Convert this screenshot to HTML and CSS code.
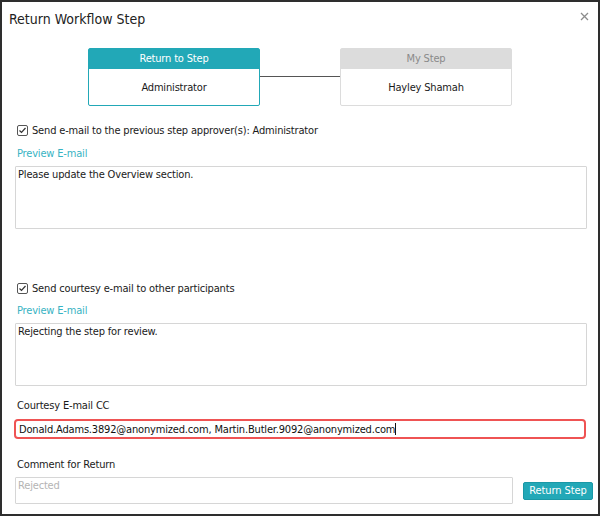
FILE: index.html
```html
<!DOCTYPE html>
<html>
<head>
    <title>Return Workflow Step</title>
    <link rel="stylesheet" href="styles.css">
</head>
<body>

<div class="dialog">
    <div class="dialog-head">
        <h1>Return Workflow Step</h1>
        <span class="close">
            <svg width="9" height="9" viewBox="0 0 9 9"><path d="M1 1 L8 8 M8 1 L1 8" stroke="#8c8c8c" stroke-width="1.3"/></svg>
        </span>
    </div>

    <div class="steps">
        <div class="step active">
            <div class="step-head">Return to Step</div>
            <div class="step-body">Administrator</div>
        </div>
        <div class="step-line"></div>
        <div class="step">
            <div class="step-head">My Step</div>
            <div class="step-body">Hayley Shamah</div>
        </div>
    </div>

    <div class="form">
        <label class="check first">
            <svg width="11" height="11" viewBox="0 0 11 11"><rect x="0.5" y="0.5" width="10" height="10" rx="1.5" fill="#fff" stroke="#555"/><path d="M2.5 5.5 L4.5 7.5 L8.5 3" fill="none" stroke="#333" stroke-width="1.2"/></svg>
            Send e-mail to the previous step approver(s): Administrator
        </label>
        <a class="preview first" href="#">Preview E-mail</a>
        <textarea class="message">Please update the Overview section.</textarea>

        <label class="check second">
            <svg width="11" height="11" viewBox="0 0 11 11"><rect x="0.5" y="0.5" width="10" height="10" rx="1.5" fill="#fff" stroke="#555"/><path d="M2.5 5.5 L4.5 7.5 L8.5 3" fill="none" stroke="#333" stroke-width="1.2"/></svg>
            Send courtesy e-mail to other participants
        </label>
        <a class="preview" href="#">Preview E-mail</a>
        <textarea class="message">Rejecting the step for review.</textarea>

        <div class="label cc">Courtesy E-mail CC</div>
        <div class="field error">Donald.Adams.3892@anonymized.com, Martin.Butler.9092@anonymized.com<span class="caret"></span></div>

        <div class="label comment">Comment for Return</div>
        <div class="comment-row">
            <textarea class="comment-box" placeholder="Rejected"></textarea>
            <button class="btn">Return Step</button>
        </div>
    </div>
</div>

</body>
</html>
```

FILE: styles.css
```css
body, html {
    margin: 0;
    padding: 0;
    font-family: "DejaVu Sans Condensed", "DejaVu Sans", sans-serif;
    font-stretch: condensed;
    font-size: 11px;
    letter-spacing: -0.17px;
    color: #1a1a1a;
}

.dialog {
    width: 600px;
    height: 516px;
    box-sizing: border-box;
    border: 2px solid #2e2e2e;
    background-color: #fff;
}

.dialog-head {
    display: flex;
    justify-content: space-between;
    align-items: center;
    height: 34px;
    padding: 0 9px 0 7px;
}

h1 {
    margin: 0;
    font-size: 14px;
    font-weight: normal;
    letter-spacing: 0;
    color: #222;
}

.close {
    display: flex;
    margin-bottom: 6px;
}

.steps {
    display: flex;
    justify-content: center;
    align-items: center;
    margin-top: 12px;
}

.step {
    width: 172px;
    height: 58px;
    box-sizing: border-box;
    border: 1px solid #dcdcdc;
    border-radius: 2px;
}

.step-head {
    height: 20px;
    line-height: 20px;
    text-align: center;
    background-color: #dcdcdc;
    color: #8a8a8a;
}

.step-body {
    height: 34px;
    padding-top: 2px;
    line-height: 34px;
    text-align: center;
    color: #1a1a1a;
}

.step.active {
    border-color: #22a8b7;
}

.step.active .step-head {
    background-color: #22a8b7;
    color: #fff;
}

.step-line {
    width: 80px;
    height: 1px;
    background-color: #555;
    margin-top: -2px;
}

.form {
    padding: 0 11px 0 13px;
}

.check {
    display: flex;
    align-items: center;
    gap: 4px;
    height: 14px;
    padding-left: 2px;
}

.check.first {
    margin-top: 17px;
}

.check.second {
    margin-top: 52px;
}

.preview {
    display: block;
    height: 14px;
    line-height: 14px;
    margin-top: 9px;
    padding-left: 2px;
    color: #37b3c3;
    text-decoration: none;
}

.preview.first {
    margin-top: 10px;
}

.message {
    display: block;
    width: 572px;
    height: 63px;
    margin-top: 5px;
}

textarea {
    box-sizing: border-box;
    border: 1px solid #d6d6d6;
    border-radius: 1px;
    padding: 1px 2px;
    font-family: inherit;
    font-size: 11px;
    letter-spacing: -0.17px;
    color: #1a1a1a;
    resize: none;
    overflow-y: scroll;
    outline: none;
}

textarea::-webkit-scrollbar {
    width: 7px;
    background-color: #efefef;
}

textarea::placeholder {
    color: #b4b4b4;
}

.label {
    height: 14px;
    line-height: 14px;
    padding-left: 2px;
}

.label.cc {
    margin-top: 13px;
}

.label.comment {
    margin-top: 19px;
}

.field {
    box-sizing: border-box;
    width: 572px;
    height: 20px;
    margin-top: 6px;
    margin-left: -1px;
    padding: 0 3px;
    line-height: 17px;
    border: 2px solid #ef5353;
    border-radius: 4px;
    color: #111;
    white-space: nowrap;
}

.caret {
    display: inline-block;
    width: 1px;
    height: 12px;
    background-color: #111;
    vertical-align: -2px;
}

.comment-row {
    display: flex;
    align-items: center;
    gap: 10px;
    margin-top: 5px;
    margin-right: -6px;
}

.comment-box {
    width: 498px;
    height: 27px;
    flex-shrink: 0;
}

.btn {
    height: 18px;
    width: 70px;
    flex-shrink: 0;
    padding: 0;
    border: 1px solid #1a98a6;
    border-radius: 2px;
    background-color: #22a8b7;
    color: #fff;
    font-family: inherit;
    font-size: 11px;
    letter-spacing: -0.1px;
    cursor: pointer;
}
```
